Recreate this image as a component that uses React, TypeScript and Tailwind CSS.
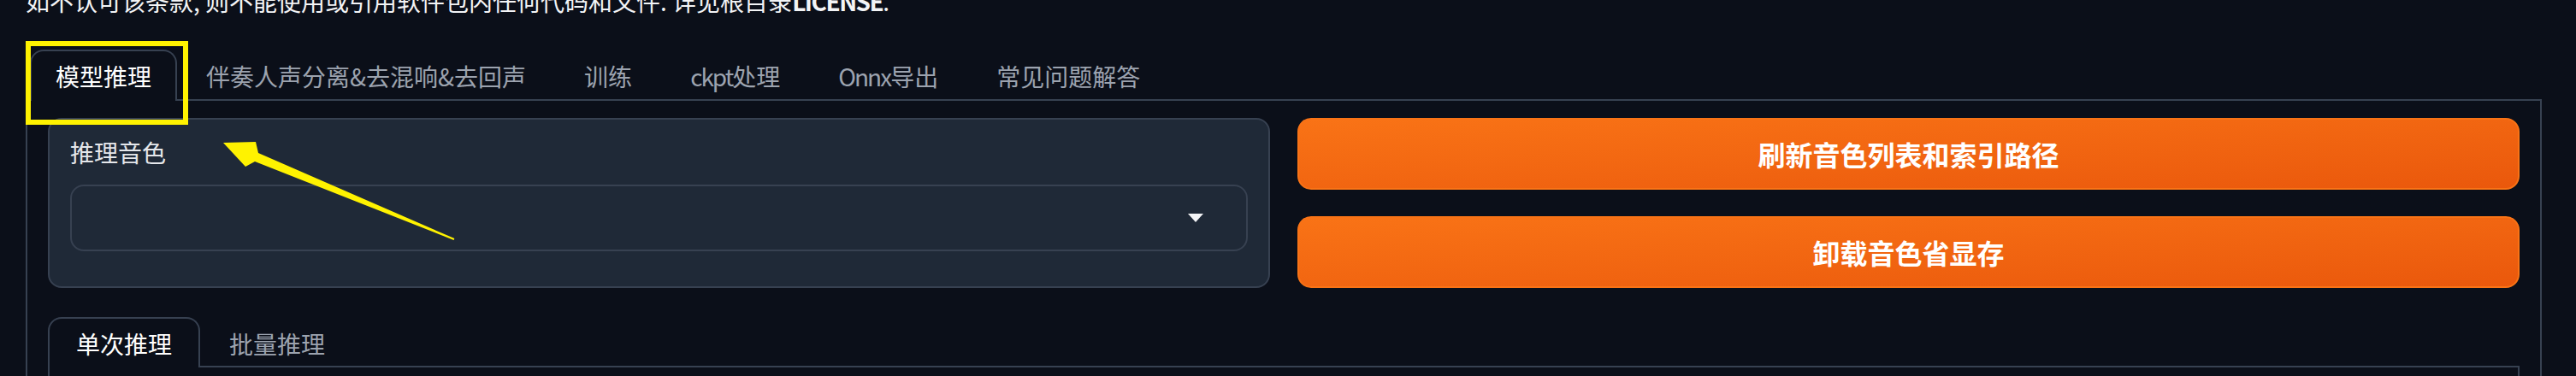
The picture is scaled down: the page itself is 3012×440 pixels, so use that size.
import React from "react";

const mainTabs: React.ReactNode[] = [
  "模型推理",
  "伴奏人声分离&去混响&去回声",
  "训练",
  <>
    <span className="tracking-[-2px]">ckpt</span>处理
  </>,
  <>
    <span className="tracking-[-2px]">Onnx</span>导出
  </>,
  "常见问题解答",
];

export default function App() {
  return (
    <div className="relative h-[440px] w-full overflow-hidden bg-[#0b0f19] pl-[30px] pr-[40px] font-['Noto_Sans_CJK_SC','Noto_Sans',sans-serif]">
      {/* notice text */}
      <div className="flex h-[58px] flex-col">
        <p className="-mt-[13px] whitespace-nowrap text-[28px] leading-[28px] text-[#f3f4f6]">
          如不认可该条款, 则不能使用或引用软件包内任何代码和文件. 详见根目录<b className="font-bold tracking-[-1.5px]">LICENSE</b>.
        </p>
      </div>

      {/* main tabs */}
      <div className="flex border-b-2 border-[#374151] pl-[5px]">
        {mainTabs.map((t, i) =>
          i === 0 ? (
            <div
              key={i}
              className="-mb-[2px] flex h-[60px] items-center whitespace-nowrap rounded-t-[16px] border-2 border-b-0 border-[#374151] bg-[#0b0f19] px-[28px] text-[28px] text-white"
            >
              {t}
            </div>
          ) : (
            <div
              key={i}
              className="-mb-[2px] flex h-[60px] items-center whitespace-nowrap border-2 border-b-0 border-transparent px-[32px] text-[28px] text-[#9ca3af]"
            >
              {t}
            </div>
          )
        )}
      </div>

      {/* panel */}
      <div className="border-2 border-t-0 border-[#374151] px-[24px] pt-[20px]">
        <div className="grid grid-cols-2 gap-[32px]">
          <div className="rounded-[16px] border-2 border-[#374151] bg-[#1f2937] px-[24px] pt-[24px]">
            <div className="mb-[24px] text-[28px] leading-[28px] text-[#e5e7eb]">推理音色</div>
            <div className="flex h-[78px] items-center justify-end rounded-[16px] border-2 border-[#374151] bg-[#1f2937] pr-[50px]">
              <svg width="18" height="10" viewBox="0 0 18 10">
                <polygon points="0,0 18,0 9,10" fill="#f3f4f6" />
              </svg>
            </div>
          </div>
          <div className="flex flex-col gap-[31px]">
            <button className="flex h-[84px] items-center justify-center rounded-[16px] border-2 border-[#f97316] bg-gradient-to-br from-[#f97316] to-[#ea580c] text-[32px] font-bold text-white">
              刷新音色列表和索引路径
            </button>
            <button className="flex h-[84px] items-center justify-center rounded-[16px] border-2 border-[#f97316] bg-gradient-to-br from-[#f97316] to-[#ea580c] text-[32px] font-bold text-white">
              卸载音色省显存
            </button>
          </div>
        </div>

        {/* sub tabs */}
        <div className="mt-[34px] flex border-b-2 border-[#374151]">
          <div className="-mb-[2px] flex h-[59px] items-center whitespace-nowrap rounded-t-[16px] border-2 border-b-0 border-[#374151] bg-[#0b0f19] px-[31px] text-[28px] text-white">
            单次推理
          </div>
          <div className="-mb-[2px] flex h-[59px] items-center whitespace-nowrap border-2 border-b-0 border-transparent px-[32px] text-[28px] text-[#9ca3af]">
            批量推理
          </div>
        </div>
        <div className="h-[200px] border-2 border-t-0 border-[#374151]" />
      </div>

      {/* annotation overlay */}
      <svg className="pointer-events-none absolute left-0 top-0" width="3012" height="440" viewBox="0 0 3012 440">
        <rect x="33" y="51" width="184" height="92" fill="none" stroke="#fff200" strokeWidth="6" />
        <polygon
          points="261,167 299,166 302,179 531.4,279.1 530.6,280.9 298,189 287,195"
          fill="#fff200"
        />
      </svg>
    </div>
  );
}
